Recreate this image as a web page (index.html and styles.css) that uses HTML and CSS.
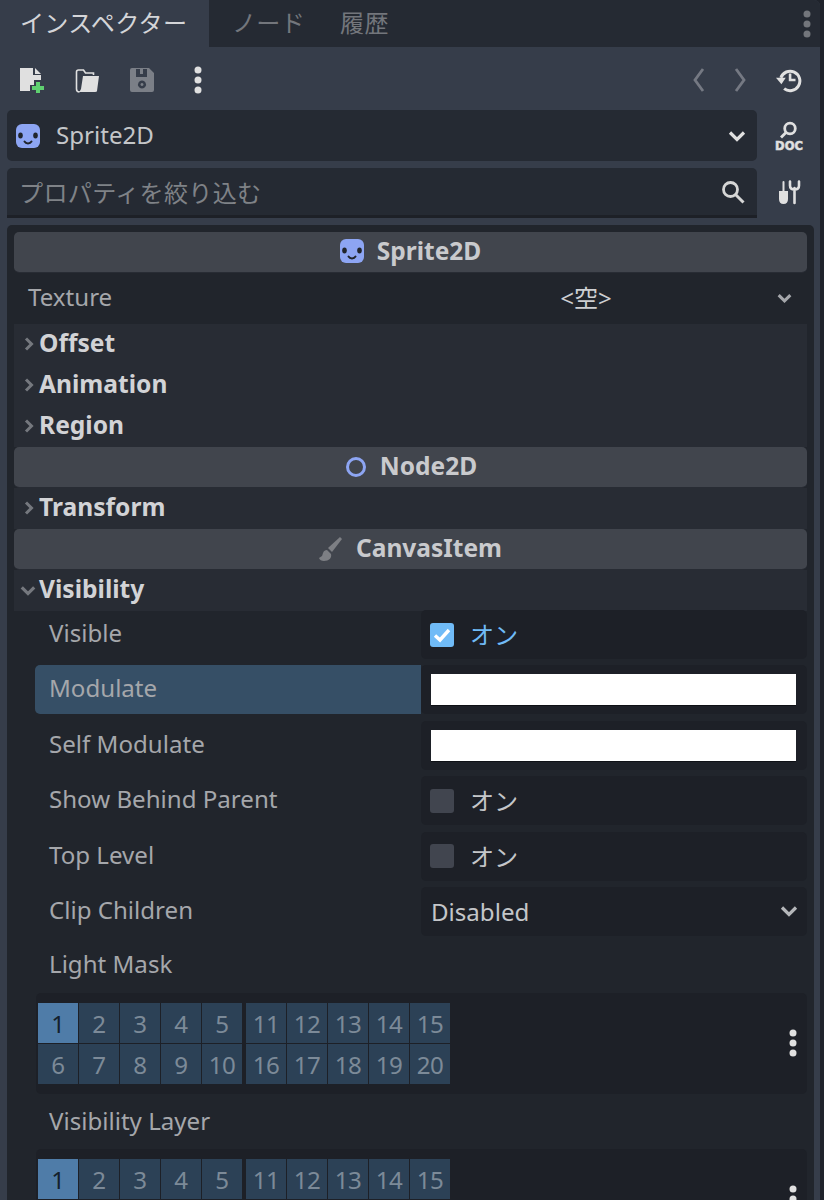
FILE: index.html
```html
<!DOCTYPE html>
<html lang="ja">
<head>
<meta charset="utf-8">
<title>インスペクター</title>
<link rel="stylesheet" href="styles.css">
</head>
<body>
<svg class="defs" width="0" height="0" aria-hidden="true">
  <symbol id="face" viewBox="0 0 24 24">
    <rect x="0" y="0" width="24" height="24" rx="6" fill="#8da5f3"/>
    <ellipse cx="4.500" cy="11.500" rx="2.300" ry="3" fill="#21252c"/>
    <ellipse cx="19.500" cy="11.500" rx="2.300" ry="3" fill="#21252c"/>
    <path d="M8.500 17.500c1.500 2.500 5.500 2.500 7 0" fill="none" stroke="#21252c" stroke-width="2" stroke-linecap="round"/>
  </symbol>
  <symbol id="dots" viewBox="0 0 8 28">
    <circle cx="4" cy="4" r="3.500"/><circle cx="4" cy="14" r="3.500"/><circle cx="4" cy="24" r="3.500"/>
  </symbol>
  <symbol id="right" viewBox="0 0 10 14">
    <path d="M2 1.500l5.500 5.500-5.500 5.500" fill="none" stroke="currentColor"/>
  </symbol>
  <symbol id="down" viewBox="0 0 18 12">
    <path d="M2 2.500l7 7 7-7" fill="none" stroke="currentColor"/>
  </symbol>
</svg>
<div class="dock">
  <div class="tabs">
    <div class="tab tab-on">インスペクター</div>
    <div class="tab">ノード</div>
    <div class="tab">履歴</div>
    <svg class="tab-menu"><use href="#dots"/></svg>
  </div>
  <div class="toolbar">
    <svg class="tool" viewBox="0 0 24 26"><path d="M0 1h13v7h8v5h-7v5h-4v6H0z" fill="#e0e0e0"/><path d="M15 1l6 6h-6z" fill="#e0e0e0"/><path d="M16 15h4v4h4v4h-4v3h-4v-3h-4v-4h4z" fill="#5fd070"/></svg>
    <svg class="tool" viewBox="0 0 24 26"><path d="M1.500 22V5q0-2 2-2h5l2 3h8v2" fill="none" stroke="#e0e0e0" stroke-width="1.600"/><path d="M8 9h16l-2 15q0 1-2 1H3q2 0 3-3z" fill="#e0e0e0"/><path d="M1.500 22q0 3 3 3" fill="none" stroke="#e0e0e0" stroke-width="1.600"/></svg>
    <svg class="tool" viewBox="0 0 24 26"><path fill-rule="evenodd" d="M2 1h17l5 5v17q0 2-2 2H2q-2 0-2-2V3q0-2 2-2zM6 2v8h11V2h-4v5h-3V2zM12 13.500a4 4 0 1 0 .01 0zM12 16a1.500 1.500 0 1 1-.01 0z" fill="#7b7f87"/></svg>
    <svg class="tool-dots"><use href="#dots"/></svg>
    <div class="spacer"></div>
    <svg class="nav" viewBox="0 0 14 26"><path d="M11 2L3 13l8 11" fill="none" stroke="#757983" stroke-width="2.800"/></svg>
    <svg class="nav" viewBox="0 0 14 26"><path d="M3 2l8 11-8 11" fill="none" stroke="#757983" stroke-width="2.800"/></svg>
    <div class="side">
      <svg class="side-icon" viewBox="0 0 24 24"><path d="M4.500 10a9 9 0 1 1 3 10" fill="none" stroke="#e0e0e0" stroke-width="2.800"/><path d="M0 10h9l-4 6z" fill="#e0e0e0"/><path d="M13 6v6h5" fill="none" stroke="#e0e0e0" stroke-width="2.400"/></svg>
    </div>
  </div>
  <div class="bar">
    <div class="field field-select">
      <svg class="face"><use href="#face"/></svg>
      <span class="select-name">Sprite2D</span>
      <svg class="select-arrow"><use href="#down"/></svg>
    </div>
    <div class="side">
      <svg class="doc" viewBox="0 0 32 34"><circle cx="17" cy="9.500" r="5.300" fill="none" stroke="#e0e0e0" stroke-width="2.800"/><path d="M13 13.500l-5 5" stroke="#e0e0e0" stroke-width="2.800"/><text x="16" y="30.500" class="doc-text">DOC</text></svg>
    </div>
  </div>
  <div class="bar bar-filter">
    <div class="field field-filter">
      <span class="filter-text">プロパティを絞り込む</span>
      <svg class="search" viewBox="0 0 24 24"><circle cx="9.500" cy="9.500" r="7" fill="none" stroke="#d6d6d6" stroke-width="2.800"/><path d="M14.500 14.500l8 8" stroke="#d6d6d6" stroke-width="3"/></svg>
    </div>
    <div class="side">
      <svg class="tools-icon" viewBox="0 0 24 26"><path d="M6.500 2v9" stroke="#e0e0e0" stroke-width="2" stroke-linecap="round"/><path d="M2 11h9v8q0 5-4.500 5T2 19z" fill="#e0e0e0"/><path d="M13 1.500v4q0 4 4.500 4t4.500-4v-4M17.500 8v15" fill="none" stroke="#e0e0e0" stroke-width="2.600" stroke-linecap="round"/></svg>
    </div>
  </div>
  <div class="inspector">
    <div class="section">
      <svg class="face"><use href="#face"/></svg>
      <span class="section-name">Sprite2D</span>
    </div>
    <div class="texture">
      <span class="texture-label">Texture</span>
      <span class="texture-value">&lt;空&gt;
        <svg class="texture-arrow"><use href="#down"/></svg>
      </span>
    </div>
    <div class="group"><svg class="arrow"><use href="#right"/></svg><span class="group-name">Offset</span></div>
    <div class="group"><svg class="arrow"><use href="#right"/></svg><span class="group-name">Animation</span></div>
    <div class="group"><svg class="arrow"><use href="#right"/></svg><span class="group-name">Region</span></div>
    <div class="section">
      <svg class="ring" viewBox="0 0 22 22"><circle cx="11" cy="11" r="8.500" fill="none" stroke="#8da5f3" stroke-width="3"/></svg>
      <span class="section-name">Node2D</span>
    </div>
    <div class="group"><svg class="arrow"><use href="#right"/></svg><span class="group-name">Transform</span></div>
    <div class="section">
      <svg class="brush" viewBox="0 0 24 24"><path d="M23 2l-2-2L9 11l4 4z" fill="#7d7f84"/><path d="M8 13c-4 0-4 4-5 6l-3 2q1 3 5 3c5 0 8-3 7-7z" fill="#7d7f84"/></svg>
      <span class="section-name">CanvasItem</span>
    </div>
    <div class="group"><svg class="arrow arrow-down"><use href="#down"/></svg><span class="group-name">Visibility</span></div>
    <div class="props">
      <div class="prop">
        <div class="prop-label">Visible</div>
        <div class="prop-value">
          <svg class="check" viewBox="0 0 24 24"><rect width="24" height="24" rx="3" fill="#70bbf7"/><path d="M5 12.500l5 4.500 9-10" fill="none" stroke="#fff" stroke-width="3.400"/></svg>
          <span class="on-active">オン</span>
        </div>
      </div>
      <div class="prop">
        <div class="prop-label prop-label-hover">Modulate</div>
        <div class="prop-value prop-value-color"><div class="swatch"></div></div>
      </div>
      <div class="prop">
        <div class="prop-label">Self Modulate</div>
        <div class="prop-value prop-value-color"><div class="swatch"></div></div>
      </div>
      <div class="prop">
        <div class="prop-label">Show Behind Parent</div>
        <div class="prop-value"><div class="unchecked"></div><span class="on-off">オン</span></div>
      </div>
      <div class="prop">
        <div class="prop-label">Top Level</div>
        <div class="prop-value"><div class="unchecked"></div><span class="on-off">オン</span></div>
      </div>
      <div class="prop">
        <div class="prop-label">Clip Children</div>
        <div class="prop-value prop-value-select">Disabled<svg class="clip-arrow"><use href="#down"/></svg></div>
      </div>
    </div>
    <div class="layer-label layer-label-first">Light Mask</div>
    <div class="layer-field">
      <div class="cells">
        <div class="cell cell-on">1</div><div class="cell">2</div><div class="cell">3</div><div class="cell">4</div><div class="cell">5</div>
        <div class="cell">6</div><div class="cell">7</div><div class="cell">8</div><div class="cell">9</div><div class="cell">10</div>
      </div>
      <div class="cells">
        <div class="cell">11</div><div class="cell">12</div><div class="cell">13</div><div class="cell">14</div><div class="cell">15</div>
        <div class="cell">16</div><div class="cell">17</div><div class="cell">18</div><div class="cell">19</div><div class="cell">20</div>
      </div>
      <svg class="layer-dots"><use href="#dots"/></svg>
    </div>
    <div class="layer-label">Visibility Layer</div>
    <div class="layer-field">
      <div class="cells">
        <div class="cell cell-on">1</div><div class="cell">2</div><div class="cell">3</div><div class="cell">4</div><div class="cell">5</div>
        <div class="cell">6</div><div class="cell">7</div><div class="cell">8</div><div class="cell">9</div><div class="cell">10</div>
      </div>
      <div class="cells">
        <div class="cell">11</div><div class="cell">12</div><div class="cell">13</div><div class="cell">14</div><div class="cell">15</div>
        <div class="cell">16</div><div class="cell">17</div><div class="cell">18</div><div class="cell">19</div><div class="cell">20</div>
      </div>
      <svg class="layer-dots"><use href="#dots"/></svg>
    </div>
  </div>
</div>
</body>
</html>
```
FILE: styles.css
```css
html, body {
  margin: 0;
  height: 100%;
  overflow: hidden;
  background: #1f232b;
}
body {
  font-family: "Noto Sans", "Noto Sans CJK JP", sans-serif;
  font-size: 24.100px;
  color: #cdcfd2;
}
.defs { position: absolute; }
.dock {
  width: 820px;
  height: 1200px;
  background: #363d4a;
  border-top-right-radius: 6px;
  overflow: hidden;
}
.tabs {
  display: flex;
  align-items: center;
  height: 47px;
  background: #252a33;
}
.tab {
  height: 47px;
  line-height: 45px;
  padding: 0 23px;
  color: #73767c;
  white-space: nowrap;
  letter-spacing: 0.250px;
}
.tab:nth-child(2) { padding: 0 19px 0 23px; }
.tab:nth-child(3) { padding: 0 16px; }
.tab-on {
  background: #363d4a;
  color: #d4d5d8;
  width: 209px;
  box-sizing: border-box;
  padding: 0 0 0 20px;
}
.tab-menu {
  width: 8px;
  height: 28px;
  margin-left: auto;
  margin-right: 9px;
  fill: #73767c;
}
.toolbar {
  display: flex;
  align-items: center;
  box-sizing: border-box;
  height: 63px;
  padding: 3px 0 0 20px;
}
.tool {
  width: 24px;
  height: 26px;
  margin-right: 31px;
}
.tool-dots {
  width: 8px;
  height: 28px;
  margin-left: 9px;
  fill: #e0e0e0;
}
.spacer { flex: 1; }
.nav {
  width: 14px;
  height: 26px;
  margin-right: 27px;
}
.side {
  width: 63px;
  display: flex;
  justify-content: center;
  align-items: center;
  flex: none;
}
.toolbar .side {
  width: 59px;
  box-sizing: border-box;
  padding-right: 4px;
  margin-left: -13px;
}
.side-icon {
  width: 26px;
  height: 26px;
}
.tools-icon {
  width: 24px;
  height: 26px;
}
.doc { width: 32px; height: 34px; }
.doc-text {
  font-family: "DejaVu Sans", sans-serif;
  font-weight: 700;
  font-size: 11.500px;
  text-anchor: middle;
  fill: #e0e0e0;
  stroke: #e0e0e0;
  stroke-width: 0.500px;
}
.bar {
  display: flex;
  height: 51px;
  padding-left: 7px;
}
.bar-filter {
  height: 50px;
  margin-top: 7px;
}
.field {
  width: 750px;
  background: #252a33;
  border-radius: 5px;
  display: flex;
  align-items: center;
  box-sizing: border-box;
}
.field-select { padding-left: 9px; }
.field-filter {
  padding: 0 12px 0 12px;
  border-radius: 5px 5px 0 0;
  border-bottom: 3px solid #1d2027;
}
.face {
  width: 24px;
  height: 24px;
  flex: none;
}
.select-name {
  margin-left: 16px;
  margin-bottom: 2px;
  color: #c4c6c9;
}
.select-arrow {
  width: 18px;
  height: 12px;
  margin-left: auto;
  margin-right: 11px;
  color: #e0e0e0;
  stroke-width: 3.200px;
}
.filter-text {
  color: #7f8287;
  letter-spacing: 0.300px;
}
.search {
  width: 24px;
  height: 24px;
  margin-left: auto;
}
.inspector {
  width: 793px;
  height: 975px;
  margin: 7px 0 0 7px;
  padding: 7px 7px 0;
  background: #21252c;
  border-radius: 5px 5px 0 0;
}
.section {
  height: 41px;
  box-sizing: border-box;
  border-bottom: 1px solid #282c34;
  background: #41454d;
  background-clip: padding-box;
  border-radius: 5px;
  display: flex;
  align-items: center;
  justify-content: center;
  gap: 13px;
  color: #c9cacd;
}
.section .face { margin-bottom: 2px; }
.section-name {
  font-size: 24.500px;
  font-weight: 700;
  margin-bottom: 3px;
}
.section .ring { width: 22px; height: 22px; margin-left: 1px; }
.section .brush { width: 24px; height: 24px; }
.texture {
  display: flex;
  align-items: center;
  box-sizing: border-box;
  height: 50.500px;
  padding-bottom: 3px;
}
.texture-label {
  width: 337px;
  padding-left: 14px;
  color: #a5a7ab;
}
.texture-value {
  position: relative;
  flex: 1;
  text-align: center;
  color: #cdcfd2;
}
.texture-arrow {
  position: absolute;
  right: 15px;
  top: 14px;
  width: 15px;
  height: 10px;
  color: #a5a7ab;
  stroke-width: 3.600px;
}
.group {
  height: 41px;
  background: #282c34;
  display: flex;
  align-items: center;
  padding-left: 10px;
  color: #d2d3d6;
}
.group-name {
  font-size: 24.600px;
  font-weight: 700;
  margin-bottom: 3px;
  margin-left: -1px;
}
.arrow {
  width: 10px;
  height: 14px;
  margin-right: 6px;
  color: #75787e;
  stroke-width: 3px;
}
.arrow-down {
  width: 16px;
  height: 11px;
  margin-left: -4px;
  margin-right: 4px;
  stroke-width: 3.600px;
}
.props {
  display: flex;
  flex-direction: column;
  gap: 6.400px;
  margin-top: -0.500px;
  padding-left: 21px;
}
.prop {
  display: flex;
  height: 49px;
}
.prop-label {
  width: 386px;
  box-sizing: border-box;
  padding-left: 14px;
  line-height: 46px;
  color: #a5a7ab;
  border-radius: 5px 0 0 5px;
}
.prop-label-hover {
  background: #364f66;
}
.prop-value {
  flex: 1;
  display: flex;
  align-items: center;
  background: #1d2027;
  border-radius: 5px;
  padding-left: 9px;
}
.prop-value-color {
  padding: 9px 11px 9px 10px;
}
.swatch {
  width: 100%;
  height: 31px;
  background: #fff;
  box-shadow: 0 1px 0 #0e1015;
}
.prop-value-select {
  padding-left: 10px;
  color: #c4c6c9;
  justify-content: space-between;
  padding-right: 9px;
}
.clip-arrow {
  width: 18px;
  height: 12px;
  color: #b5b7ba;
  stroke-width: 3.200px;
}
.check {
  width: 24px;
  height: 24px;
  flex: none;
}
.unchecked {
  width: 24px;
  height: 24px;
  border-radius: 3px;
  background: #41454f;
}
.on-active, .on-off {
  margin-left: 16px;
  margin-bottom: 2px;
}
.on-active { color: #70bbf7; }
.on-off { color: #c4c6c9; }
.layer-label {
  height: 55px;
  box-sizing: border-box;
  padding-left: 35px;
  line-height: 54px;
  color: #a5a7ab;
}
.layer-label-first {
  height: 57px;
  line-height: 56px;
}
.layer-field {
  margin-left: 22px;
  height: 101px;
  background: #1d2027;
  border-radius: 5px;
  display: flex;
  align-items: center;
  gap: 4px;
  padding: 0 10px 0 2px;
}
.cells {
  display: grid;
  grid-template-columns: repeat(5, 40px);
  grid-auto-rows: 40px;
  gap: 1px;
}
.cell {
  background: #2c4156;
  color: #7c8a98;
  text-align: center;
  line-height: 41px;
  letter-spacing: -0.500px;
}
.cell-on {
  background: #4f7ca8;
  color: #14202c;
}
.layer-dots {
  width: 8px;
  height: 28px;
  margin-left: auto;
  fill: #e0e0e0;
}
```
